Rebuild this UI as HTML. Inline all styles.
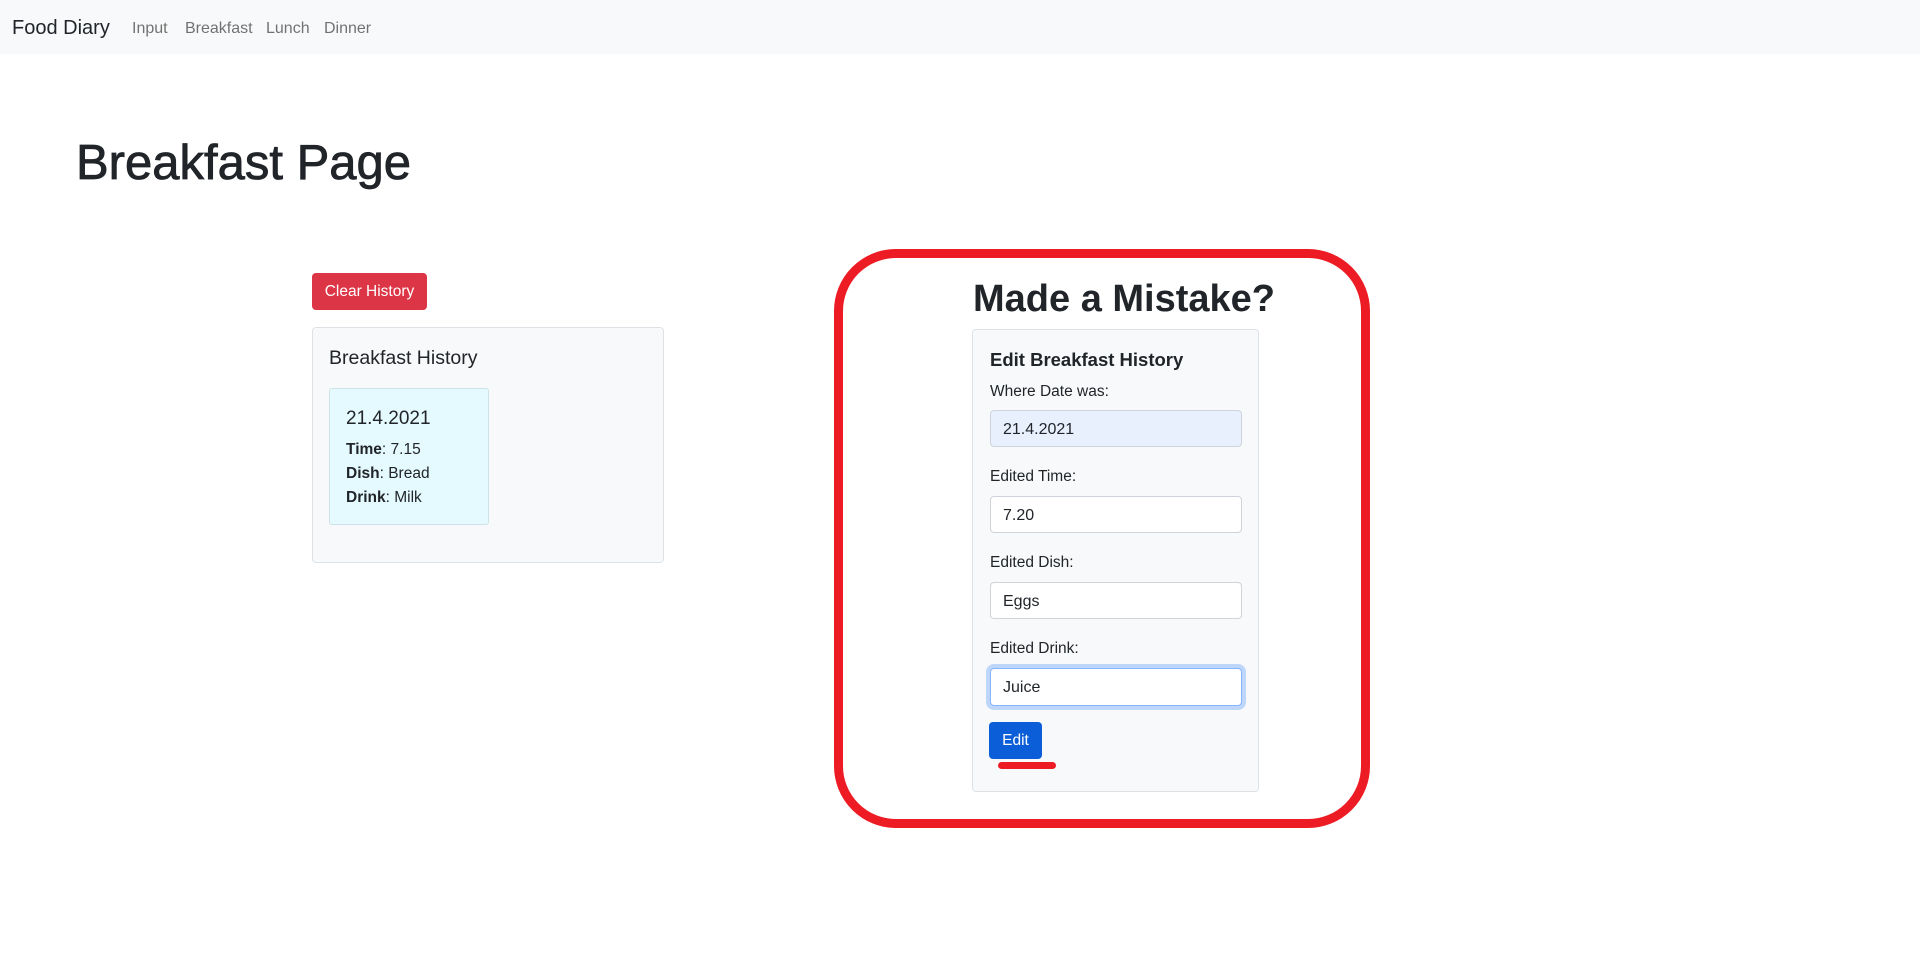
<!DOCTYPE html>
<html><head><meta charset="utf-8"><style>
*{box-sizing:border-box;margin:0;padding:0}
body{width:1920px;height:965px;background:#fff;font-family:"Segoe UI","Liberation Sans",sans-serif;color:#212529;position:relative;overflow:hidden}
.a{position:absolute;white-space:nowrap}
.nav{position:absolute;left:0;top:0;width:1920px;height:54px;background:#f8f9fa}
.lnk{color:rgba(0,0,0,.55);font-size:16px;top:20px}
.inp{position:absolute;left:990px;width:252px;height:37px;border:1px solid #ced4da;border-radius:4px;background:#fff;font-size:16px;padding:9px 12px;line-height:19px}
.lbl{font-size:15.5px;left:990px;line-height:20px}
</style></head><body>
<div class="nav"></div>
<div class="a" style="left:12px;top:15px;font-size:20px;line-height:26px">Food Diary</div>
<div class="a lnk" style="left:132px">Input</div>
<div class="a lnk" style="left:185px">Breakfast</div>
<div class="a lnk" style="left:266px">Lunch</div>
<div class="a lnk" style="left:324px">Dinner</div>

<div class="a" style="left:76px;top:133px;font-size:49px;line-height:60px;font-weight:500;-webkit-text-stroke:0.8px #212529">Breakfast Page</div>

<div class="a" style="left:312px;top:273px;width:115px;height:37px;background:#dc3545;color:#fff;border-radius:4px;font-size:15.5px;line-height:38px;text-align:center">Clear History</div>

<div class="a" style="left:312px;top:327px;width:352px;height:236px;background:#f8f9fa;border:1px solid #dee2e6;border-radius:4px"></div>
<div class="a" style="left:329px;top:345px;font-size:19.5px;line-height:26px;font-weight:500">Breakfast History</div>
<div class="a" style="left:329px;top:388px;width:160px;height:137px;background:#e5fafe;border:1px solid #cfe2e6;border-radius:3px"></div>
<div class="a" style="left:346px;top:406px;font-size:19px;line-height:26px">21.4.2021</div>
<div class="a" style="left:346px;top:438px;font-size:15.5px;line-height:24px"><b>Time</b>: 7.15<br><b>Dish</b>: Bread<br><b>Drink</b>: Milk</div>

<div class="a" style="left:834px;top:249px;width:536px;height:579px;border:9px solid #ed1c24;border-radius:62px"></div>
<div class="a" style="left:856px;width:536px;top:274px;text-align:center;font-size:38px;line-height:50px;font-weight:700">Made a Mistake?</div>

<div class="a" style="left:972px;top:329px;width:287px;height:463px;background:#f8f9fa;border:1px solid #dee2e6;border-radius:4px"></div>
<div class="a" style="left:990px;top:347px;font-size:18.5px;line-height:26px;font-weight:700;color:#212529">Edit Breakfast History</div>
<div class="a lbl" style="top:382px">Where Date was:</div>
<div class="inp" style="top:410px;background:#e8f0fe">21.4.2021</div>
<div class="a lbl" style="top:467px">Edited Time:</div>
<div class="inp" style="top:496px">7.20</div>
<div class="a lbl" style="top:553px">Edited Dish:</div>
<div class="inp" style="top:582px">Eggs</div>
<div class="a lbl" style="top:639px">Edited Drink:</div>
<div class="inp" style="top:668px;height:38px;border-color:#86b7fe;box-shadow:0 0 0 4px rgba(13,110,253,.25)">Juice</div>
<div class="a" style="left:989px;top:722px;width:53px;height:37px;background:#0b5ed7;color:#fff;border-radius:4px;font-size:15.5px;line-height:38px;text-align:center">Edit</div>
<div class="a" style="left:998px;top:762px;width:58px;height:7px;background:#ed1c24;border-radius:4px"></div>
</body></html>
